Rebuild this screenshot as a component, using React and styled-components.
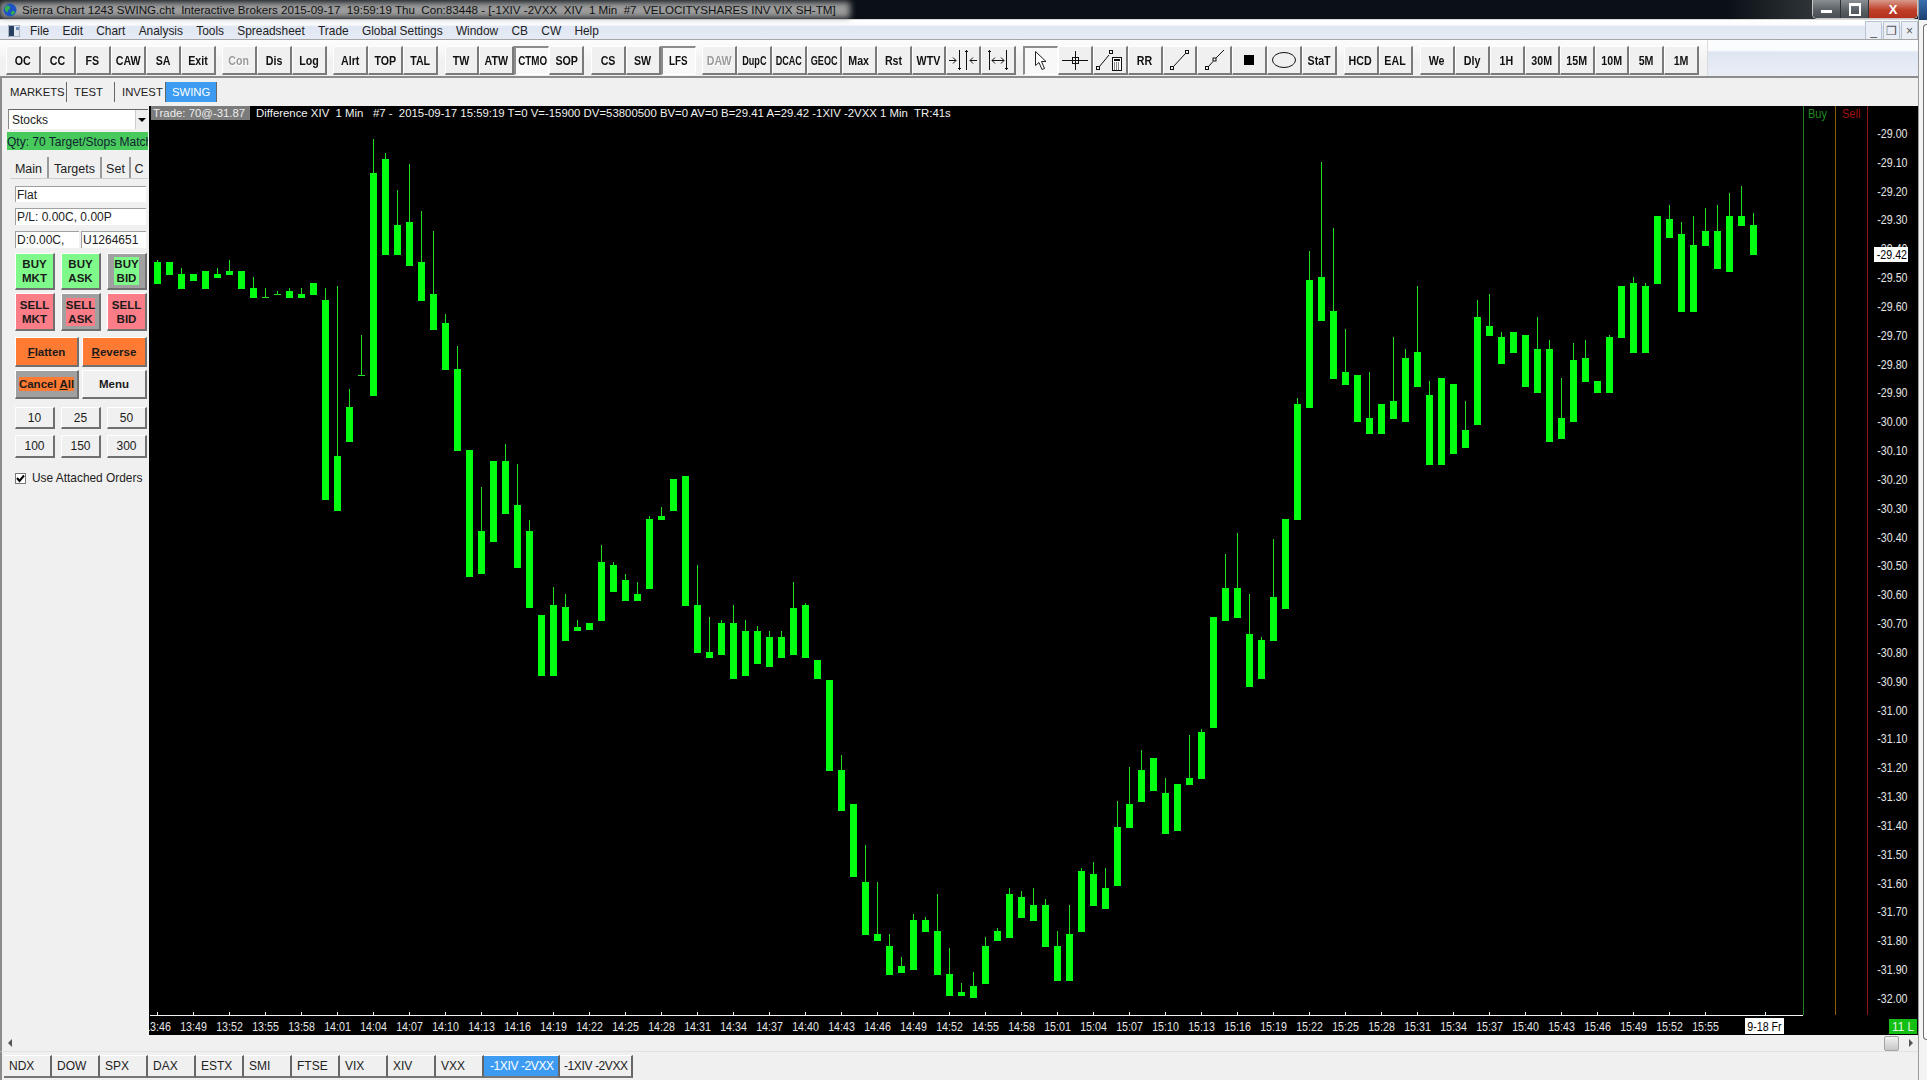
import React from 'react'
import styled, { createGlobalStyle } from 'styled-components'

const GlobalStyle = createGlobalStyle`
  html, body {
    margin: 0;
    width: 1927px;
    height: 1080px;
    overflow: hidden;
    background: #f0f0f0;
    font-family: "Liberation Sans", Arial, sans-serif;
  }
`

// wick top (0 = none), body top, body bottom, in page pixels; one bar per minute
const BARS = [
  [260, 262, 284], [0, 262, 275], [268, 274, 289], [0, 274, 281], [0, 271, 289], [268, 274, 278], [260, 271, 275], [0, 271, 289],
  [277, 288, 298], [288, 297, 298], [291, 294, 295], [288, 291, 298], [288, 294, 298], [0, 283, 295], [288, 300, 500], [286, 456, 511],
  [389, 407, 442], [335, 375, 376], [139, 173, 396], [153, 159, 255], [190, 225, 255], [164, 222, 266], [211, 262, 301], [231, 294, 330],
  [314, 323, 370], [346, 369, 451], [0, 450, 577], [487, 531, 574], [0, 461, 542], [444, 461, 514], [464, 505, 568], [520, 531, 608],
  [0, 615, 676], [587, 605, 676], [594, 607, 641], [620, 627, 631], [0, 623, 630], [545, 562, 621], [562, 565, 592], [574, 580, 601],
  [582, 594, 601], [516, 519, 589], [507, 516, 520], [0, 479, 511], [0, 476, 606], [565, 605, 653], [617, 652, 658], [620, 623, 655],
  [605, 623, 679], [620, 631, 676], [626, 631, 664], [631, 637, 667], [631, 637, 658], [582, 608, 655], [603, 605, 658], [0, 660, 679],
  [0, 680, 771], [755, 770, 811], [0, 804, 877], [845, 882, 935], [882, 934, 941], [934, 946, 975], [957, 966, 973], [914, 920, 970],
  [917, 920, 932], [894, 931, 975], [948, 974, 996], [983, 992, 996], [972, 986, 998], [937, 946, 984], [928, 931, 941], [888, 894, 938],
  [891, 897, 918], [888, 905, 921], [899, 905, 947], [931, 946, 981], [905, 934, 981], [868, 871, 932], [862, 874, 906], [868, 888, 909],
  [801, 827, 886], [767, 804, 828], [750, 770, 802], [0, 758, 791], [778, 793, 834], [0, 784, 831], [735, 778, 785], [729, 732, 779],
  [0, 617, 728], [554, 588, 621], [533, 588, 618], [594, 634, 687], [637, 640, 679], [539, 597, 641], [0, 519, 609], [398, 404, 520],
  [251, 280, 408], [162, 277, 321], [228, 311, 379], [329, 372, 385], [0, 375, 422], [372, 418, 434], [0, 404, 434], [337, 401, 419],
  [349, 358, 422], [286, 352, 387], [381, 395, 465], [0, 378, 465], [0, 384, 454], [401, 430, 448], [300, 317, 425], [294, 326, 336],
  [332, 337, 364], [0, 332, 353], [0, 335, 387], [317, 349, 393], [340, 349, 442], [378, 418, 439], [343, 360, 422], [340, 358, 382],
  [0, 381, 393], [335, 337, 393], [0, 286, 338], [277, 283, 353], [283, 286, 353], [0, 216, 284], [205, 219, 238], [222, 234, 312],
  [216, 245, 312], [208, 231, 246], [205, 231, 269], [193, 216, 272], [186, 216, 226], [213, 225, 255]
]

const barLeft = i => 154 + 12 * i
const timeLabel = i => {
  const total = 13 * 60 + 46 + i
  return `${Math.floor(total / 60)}:${String(total % 60).padStart(2, '0')}`
}

const TICKS = Array.from({ length: 44 }, (_, k) => k * 3)
const PRICES = Array.from({ length: 31 }, (_, k) => k)

const MENU = ['File', 'Edit', 'Chart', 'Analysis', 'Tools', 'Spreadsheet', 'Trade', 'Global Settings', 'Window', 'CB', 'CW', 'Help']

const TOOLBAR = [
  ['OC', 'CC', 'FS', 'CAW', 'SA', 'Exit'],
  ['Con:off', 'Dis', 'Log'],
  ['Alrt', 'TOP', 'TAL'],
  ['TW', 'ATW', 'CTMO:on', 'SOP'],
  ['CS', 'SW', 'LFS:on'],
  ['DAW:off', 'DupC:tight', 'DCAC:tight', 'GEOC:tight', 'Max', 'Rst', 'WTV', '#squeeze', '#stretch'],
  ['#cursor:on', '#cross', '#calc', 'RR', '#line', '#ray', '#stop', '#ellipse', 'StaT'],
  ['HCD', 'EAL'],
  ['We', 'Dly', '1H', '30M', '15M', '10M', '5M', '1M']
]

const BOTTOM_TABS = ['NDX', 'DOW', 'SPX', 'DAX', 'ESTX', 'SMI', 'FTSE', 'VIX', 'XIV', 'VXX']

const Page = styled.div`
  display: flex;
  width: 1927px;
  height: 1080px;
`
const Window = styled.div`
  display: flex;
  flex-direction: column;
  width: 1918px;
  height: 1080px;
`
const EdgeStrip = styled.div`
  flex: 1;
  display: flex;
  flex-direction: column;
  background: #f4f4f4;
  border-left: 1px solid #9a9a9a;
`
const EdgeIcon = styled.div`
  height: 20px;
  background: linear-gradient(#3a6fb0, #1c3f70);
`
const EdgeBox = styled.div`
  flex: 1;
  margin: 4px 0 40px 4px;
  background: #fff;
  border: 1px solid #707070;
  border-right: 0;
  border-radius: 5px 0 0 5px;
`

const TitleBar = styled.div`
  display: flex;
  align-items: center;
  justify-content: space-between;
  box-sizing: border-box;
  height: 20px;
  flex: none;
  background: linear-gradient(90deg, #0b1016 0, #0b1016 90%, #2f3439 94.5%, #15191e 100%);
  border-bottom: 1px solid #d8d8d8;
`
const TitleLeft = styled.div`
  position: relative;
  display: flex;
  align-items: center;
  gap: 5px;
  padding: 0 14px 0 3px;
  height: 19px;
  font-size: 11.6px;
  color: #111;
  white-space: nowrap;
  &::before {
    content: '';
    position: absolute;
    inset: 2px 0 1px 0;
    background: #9c9c9c;
    filter: blur(3px);
  }
`
const TitleText = styled.span`
  position: relative;
  white-space: pre;
`
const Globe = styled.svg`
  position: relative;
  flex: none;
`
const WinButtons = styled.div`
  display: flex;
  height: 18px;
  align-self: flex-start;
  border: 1px solid #c8c8c8;
  border-top: 0;
  border-radius: 0 0 5px 5px;
  overflow: hidden;
`
const WinButton = styled.div`
  display: flex;
  align-items: center;
  justify-content: center;
  width: ${p => p.$w}px;
  background: ${p => p.$close
    ? 'linear-gradient(#d89a8c, #c0402a 55%, #b5301c)'
    : 'linear-gradient(#8a8f94, #5c6167 55%, #484d52)'};
  border-right: 1px solid #30343a;
  color: #fff;
  font-weight: bold;
  font-size: 13px;
  &:last-child {
    border-right: 0;
  }
`
const MinGlyph = styled.div`
  width: 11px;
  height: 3px;
  margin-top: 5px;
  background: #fff;
`
const RestoreGlyph = styled.div`
  width: 8px;
  height: 8px;
  border: 2px solid #fff;
  border-top-width: 3px;
`

const MenuBar = styled.div`
  display: flex;
  align-items: center;
  box-sizing: border-box;
  height: 20px;
  flex: none;
  background: linear-gradient(#ffffff 0, #fbfcfe 25%, #dfe6f3 35%, #e6ebf5 100%);
  border-bottom: 1px solid #a6a6a6;
  font-size: 11.9px;
  color: #222;
`
const MenuIcon = styled.svg`
  flex: none;
  margin: 2px 10px 0 8px;
`
const MenuItems = styled.div`
  display: flex;
  gap: 13.3px;
  flex: 1;
  padding-top: 3px;
`
const MdiButtons = styled.div`
  display: flex;
  gap: 1px;
  align-self: stretch;
  padding-top: 1px;
`
const MdiButton = styled.div`
  display: flex;
  align-items: center;
  justify-content: center;
  box-sizing: border-box;
  width: 17px;
  background: #e9eef7;
  border: 1px solid #b9c3d2;
  border-bottom: 0;
  color: #555;
  font-size: 12px;
`

const Toolbar = styled.div`
  display: flex;
  height: 38px;
  flex: none;
  box-sizing: border-box;
  background: linear-gradient(#fdfdfd, #f1f1f1 60%, #f1f1f1);
  border-bottom: 2px solid #8c8c8c;
`
const ToolGroups = styled.div`
  display: flex;
  gap: 6.5px;
  padding: 6px 0 0 6px;
`
const ToolGroup = styled.div`
  display: flex;
`
const ToolFill = styled.div`
  flex: 1;
  margin-left: 8px;
  background: linear-gradient(#fbfcfe, #fbfcfe 28%, #dfe6f3 34%, #e9edf6);
  border-left: 1px solid #dcdcdc;
`
const ToolButton = styled.button`
  display: flex;
  align-items: center;
  justify-content: center;
  box-sizing: border-box;
  width: 34.93px;
  height: 29px;
  padding: 0;
  background: ${p => (p.$on ? '#f8f8f8' : '#f0f0f0')};
  border-style: solid;
  border-width: ${p => (p.$on ? '2px 1px 1px 2px' : '1px 2px 2px 1px')};
  border-color: ${p => (p.$on ? '#8c8c8c #ffffff #ffffff #8c8c8c' : '#ffffff #7a7a7a #7a7a7a #ffffff')};
  font-family: "Liberation Sans", Arial, sans-serif;
  font-size: ${p => (p.$on ? 12 : 13)}px;
  font-weight: bold;
  color: ${p => (p.$off ? '#9a9a9a' : '#111')};
  text-shadow: ${p => (p.$off ? '1px 1px 0 #fff' : 'none')};
`
const ToolLabel = styled.span`
  display: inline-block;
  transform: scaleX(${p => (p.$tight ? 0.7 : 0.82)});
  white-space: nowrap;
`

const TabRow = styled.div`
  display: flex;
  align-items: stretch;
  height: 28px;
  flex: none;
  box-sizing: border-box;
  padding: 4px 0 4px 8px;
  background: #f0f0f0;
  border-left: 2px solid #8c8c8c;
  font-size: 11.3px;
  color: #222;
`
const SheetTab = styled.div`
  display: flex;
  align-items: center;
  width: ${p => p.$w}px;
  padding: 0 0 0 ${p => p.$pad}px;
  box-sizing: border-box;
  background: ${p => (p.$active ? '#3d9cf2' : 'transparent')};
  color: ${p => (p.$active ? '#fff' : '#222')};
  border-right: 1px solid #666;
`

const Body = styled.div`
  display: flex;
  height: 929px;
  flex: none;
`
const Side = styled.div`
  display: flex;
  flex-direction: column;
  box-sizing: border-box;
  width: 149px;
  flex: none;
  padding: 3px 1px 0 5px;
  background: #f0f0f0;
  border-left: 2px solid #8c8c8c;
  font-size: 12px;
  color: #222;
  overflow: hidden;
`
const Combo = styled.div`
  display: flex;
  justify-content: space-between;
  align-items: center;
  box-sizing: border-box;
  height: 20px;
  margin-left: 1px;
  padding-left: 3px;
  background: #fff;
  border-top: 1px solid #666;
  border-left: 1px solid #888;
  line-height: 20px;
`
const ComboArrow = styled.div`
  display: flex;
  align-items: center;
  justify-content: center;
  width: 12px;
  height: 100%;
  background: #eee;
  border-left: 1px solid #ccc;
  &::after {
    content: '';
    border: 4px solid transparent;
    border-top: 4px solid #000;
    border-bottom: 0;
  }
`
const QtyBar = styled.div`
  height: 18px;
  margin-top: 3px;
  line-height: 20px;
  background: #48c95c;
  color: #123;
  white-space: nowrap;
  overflow: hidden;
`
const PanelTabs = styled.div`
  display: flex;
  height: 21px;
  margin: 7px 0 0 3px;
  border-bottom: 1px solid #cfcfcf;
  font-size: 12.5px;
`
const PanelTab = styled.div`
  display: flex;
  align-items: center;
  justify-content: center;
  box-sizing: border-box;
  width: ${p => p.$w}px;
  flex: none;
  padding-top: 2px;
  border-right: ${p => (p.$last ? 0 : '2px solid #9a9a9a')};
`
const Pane = styled.div`
  display: flex;
  flex-direction: column;
  padding: 0 0 0 8px;
`
const Field = styled.div`
  box-sizing: border-box;
  width: ${p => p.$w || 131}px;
  height: ${p => p.$h || 17}px;
  padding-left: 1px;
  line-height: 17px;
  background: #fff;
  border-top: 1px solid #a0a0a0;
  border-left: 1px solid #a0a0a0;
  white-space: nowrap;
  overflow: hidden;
`
const FieldRow = styled.div`
  display: flex;
  gap: 2px;
  margin-top: ${p => p.$top}px;
`
const Row = styled.div`
  display: flex;
  gap: ${p => p.$gap}px;
  margin-top: ${p => p.$top}px;
`
const TradeButton = styled.div`
  display: flex;
  align-items: center;
  justify-content: center;
  box-sizing: border-box;
  width: ${p => p.$w}px;
  height: ${p => p.$h}px;
  background: ${p => p.$bg};
  border-style: solid;
  border-width: 1px 2px 2px 1px;
  border-color: #fff #707070 #707070 #fff;
  font-size: ${p => p.$size || 12}px;
  font-weight: ${p => (p.$thin ? 'normal' : 'bold')};
  color: #1a1a1a;
  line-height: 14px;
  text-align: center;
`
const Highlight = styled.span`
  display: inline-block;
  background: ${p => p.$bg};
`
const CheckRow = styled.label`
  display: flex;
  align-items: center;
  gap: 6px;
  margin-top: 13px;
  font-size: 11.9px;
  white-space: nowrap;
`
const CheckBox = styled.span`
  display: flex;
  width: 11px;
  height: 11px;
  box-sizing: border-box;
  background: #fff;
  border: 1px solid #777;
`

const Chart = styled.div`
  position: relative;
  width: 1769px;
  background: #000;
  overflow: hidden;
`
const ChartHeader = styled.div`
  position: relative;
  display: flex;
  align-items: center;
  height: 14px;
  padding-left: 2px;
  color: #f2f2f2;
  font-size: 11.4px;
  white-space: pre;
`
const TradeTag = styled.span`
  width: 99px;
  height: 14px;
  line-height: 14px;
  padding-left: 2px;
  box-sizing: border-box;
  margin-right: 6px;
  background: #7b7b7b;
  color: #ececec;
  overflow: hidden;
`
const ChartCanvas = styled.svg`
  position: absolute;
  left: 0;
  top: 0;
  display: block;
  font-family: "Liberation Sans", Arial, sans-serif;
`

const ScrollRow = styled.div`
  display: flex;
  align-items: center;
  height: 17px;
  flex: none;
  box-sizing: border-box;
  padding: 0 5px 0 6px;
  background: #f0f0f0;
  border-left: 2px solid #8c8c8c;
  border-bottom: 1px solid #e2e2e2;
`
const ScrollArrow = styled.div`
  width: 0;
  height: 0;
  border-style: solid;
  border-width: 4px ${p => (p.$right ? 0 : '4px')} 4px ${p => (p.$right ? '4px' : 0)};
  border-color: transparent ${p => (p.$right ? 'transparent' : '#555')} transparent ${p => (p.$right ? '#555' : 'transparent')};
`
const ScrollTrack = styled.div`
  flex: 1;
  display: flex;
  justify-content: flex-end;
  padding-right: 10px;
`
const ScrollThumb = styled.div`
  width: 15px;
  height: 15px;
  background: linear-gradient(#f2f2f2, #c6c6c6);
  border: 1px solid #a4a4a4;
  border-radius: 2px;
  box-sizing: border-box;
`

const BottomTabs = styled.div`
  display: flex;
  flex: 1;
  align-items: flex-start;
  padding: 3px 0 0 2px;
  background: #f0f0f0;
  border-left: 2px solid #8c8c8c;
  box-sizing: border-box;
  font-size: 12px;
`
const BottomTab = styled.div`
  display: flex;
  align-items: center;
  box-sizing: border-box;
  width: ${p => p.$w}px;
  height: 23px;
  padding-left: ${p => p.$pad || 5}px;
  background: ${p => (p.$active ? '#3d9cf2' : '#f0f0f0')};
  color: ${p => (p.$active ? '#fff' : '#222')};
  border-right: 2px solid #666;
  border-bottom: 2px solid #777;
  border-top: 1px solid #fff;
  letter-spacing: ${p => p.$track || 0}px;
  white-space: nowrap;
`

const icons = {
  squeeze: (
    <svg width='30' height='22' viewBox='0 0 30 22' fill='none' stroke='#111'>
      <path d='M1 11.500h7M5 8.500l3 3-3 3M22 11.500h7M25 8.500l-3 3 3 3M11.500 1v20M18.500 1v20M10 19.500h3M17 2.500h3' />
    </svg>
  ),
  stretch: (
    <svg width='30' height='22' viewBox='0 0 30 22' fill='none' stroke='#111'>
      <path d='M6.500 1v20M23.500 1v20M5 2.500h3M22 19.500h3M9 11.500h12M12 8.500l-3 3 3 3M18 8.500l3 3-3 3' />
    </svg>
  ),
  cursor: (
    <svg width='16' height='22' viewBox='0 0 16 22' fill='#fff' stroke='#222'>
      <path d='M2.500 1.500v14l3.500-3 3 7 2.500-1-3-7h4.500z' />
    </svg>
  ),
  cross: (
    <svg width='28' height='22' viewBox='0 0 28 22' fill='none' stroke='#111'>
      <path d='M1 11.500h26M14.500 2v19' />
      <rect x='11.500' y='8.500' width='6' height='6' />
    </svg>
  ),
  calc: (
    <svg width='30' height='24' viewBox='0 0 30 24' fill='none' stroke='#111'>
      <rect x='1.500' y='18.500' width='3' height='3' />
      <path d='M4.500 18.500L14 7' />
      <rect x='14.500' y='2.500' width='3' height='3' />
      <rect x='17.500' y='9.500' width='9' height='13' fill='#fff' />
      <rect x='19' y='11' width='6' height='2' fill='#111' stroke='none' />
      <path d='M19 15h6M19 17h6M19 19h6M19 21h6' strokeDasharray='1 1' />
    </svg>
  ),
  line: (
    <svg width='24' height='24' viewBox='0 0 24 24' fill='none' stroke='#111'>
      <rect x='3.500' y='18.500' width='3' height='3' />
      <path d='M6.500 18.500L18 6' />
      <rect x='18.500' y='2.500' width='3' height='3' />
    </svg>
  ),
  ray: (
    <svg width='24' height='24' viewBox='0 0 24 24' fill='none' stroke='#111'>
      <rect x='3.500' y='18.500' width='3' height='3' />
      <path d='M6.500 18.500l4.500-5M14 10l8-8' />
      <rect x='11' y='10' width='3' height='3' />
    </svg>
  ),
  stop: (
    <svg width='12' height='12' viewBox='0 0 12 12'>
      <rect x='1' y='1' width='10' height='10' fill='#000' />
    </svg>
  ),
  ellipse: (
    <svg width='26' height='20' viewBox='0 0 26 20' fill='none' stroke='#111'>
      <ellipse cx='13' cy='10' rx='11.500' ry='7.500' />
    </svg>
  )
}

const ToolItem = ({ spec }) => {
  const [name, state] = spec.split(':')
  const isIcon = name.startsWith('#')
  return (
    <ToolButton $on={state === 'on'} $off={state === 'off'}>
      {isIcon ? icons[name.slice(1)] : <ToolLabel $tight={state === 'tight'}>{name}</ToolLabel>}
    </ToolButton>
  )
}

const ChartDrawing = () => (
  <ChartCanvas width='1769' height='929' viewBox='149 106 1769 929'>
    {BARS.map(([wick, top, bottom], i) => (
      <g key={i}>
        {wick > 0 && <rect x={barLeft(i) + 3} y={wick} width='1' height={top - wick} fill='#22dd22' />}
        <rect x={barLeft(i)} y={top} width='7' height={bottom - top} fill='#00ff10' />
        {bottom - top < 2 && <rect x={barLeft(i)} y={top} width='7' height='1' fill='#22dd22' />}
      </g>
    ))}

    <rect x='1803' y='106' width='1' height='909' fill='#237f23' />
    <rect x='1835' y='106' width='1' height='909' fill='#8b5c06' />
    <rect x='1867' y='106' width='1' height='909' fill='#8f1414' />
    <text x='0' y='0' fontSize='13' fill='#1e8a1e' transform='translate(1808 118) scale(.85 1)'>Buy</text>
    <text x='0' y='0' fontSize='13' fill='#a01010' transform='translate(1842 118) scale(.85 1)'>Sell</text>

    {PRICES.map(k => (
      <text key={k} x='0' y='0' fontSize='13' fill='#e6e6e6' textAnchor='end' transform={`translate(1907.500 ${138 + k * 28.83}) scale(.82 1)`}>
        {`-${(29 + k / 10).toFixed(2)}`}
      </text>
    ))}
    <rect x='1874' y='247' width='34' height='15' fill='#fff' />
    <text x='0' y='0' fontSize='13' fill='#000' textAnchor='end' transform='translate(1907 259) scale(.82 1)'>-29.42</text>

    <rect x='150' y='1015' width='1653' height='1' fill='#f0f0f0' />
    {TICKS.map(i => (
      <g key={i}>
        <rect x={157 + 12 * i} y='1012' width='1' height='3' fill='#f0f0f0' />
        <text x='0' y='0' fontSize='13' fill='#e6e6e6' textAnchor='middle' transform={`translate(${157.5 + 12 * i} 1031) scale(.82 1)`}>
          {timeLabel(i)}
        </text>
      </g>
    ))}
    <rect x='1765' y='1012' width='1' height='3' fill='#f0f0f0' />
    <rect x='1745' y='1018' width='39' height='16' fill='#fff' />
    <text x='0' y='0' fontSize='13' fill='#000' textAnchor='middle' transform='translate(1764.500 1031) scale(.82 1)'>9-18 Fr</text>

    <rect x='1889' y='1019' width='28' height='15' fill='#12bf12' />
    <text x='0' y='0' fontSize='13' fill='#e8f8e8' textAnchor='middle' transform='translate(1903 1031) scale(.9 1)'>11 L</text>
  </ChartCanvas>
)

export default function App() {
  return (
    <Page>
      <GlobalStyle />
      <Window>
        <TitleBar>
          <TitleLeft>
            <Globe width='14' height='14' viewBox='0 0 14 14'>
              <circle cx='7' cy='7' r='6.500' fill='#1d54c4' />
              <path d='M3 3c2-1 4 0 4 2s-2 1-2 3-2 1-3-1 0-3 1-4zM9 8c1.500 0 3 0 3 1s-2 3-3 3-1-4 0-4z' fill='#35b04a' />
            </Globe>
            <TitleText>Sierra Chart 1243 SWING.cht  Interactive Brokers 2015-09-17  19:59:19 Thu  Con:83448 - [-1XIV -2VXX  XIV  1 Min  #7  VELOCITYSHARES INV VIX SH-TM]</TitleText>
          </TitleLeft>
          <WinButtons>
            <WinButton $w={27}><MinGlyph /></WinButton>
            <WinButton $w={27}><RestoreGlyph /></WinButton>
            <WinButton $w={48} $close>X</WinButton>
          </WinButtons>
        </TitleBar>

        <MenuBar>
          <MenuIcon width='12' height='12' viewBox='0 0 12 12'>
            <rect x='0' y='0' width='12' height='12' fill='#dfe6ef' stroke='#7d8794' />
            <rect x='1' y='1' width='5' height='10' fill='#27405f' />
            <rect x='8' y='2' width='3' height='3' fill='#6d8fb8' />
          </MenuIcon>
          <MenuItems>
            {MENU.map(item => <span key={item}>{item}</span>)}
          </MenuItems>
          <MdiButtons>
            <MdiButton>_</MdiButton>
            <MdiButton>❐</MdiButton>
            <MdiButton>×</MdiButton>
          </MdiButtons>
        </MenuBar>

        <Toolbar>
          <ToolGroups>
            {TOOLBAR.map((group, g) => (
              <ToolGroup key={g}>
                {group.map(spec => <ToolItem key={spec} spec={spec} />)}
              </ToolGroup>
            ))}
          </ToolGroups>
          <ToolFill />
        </Toolbar>

        <TabRow>
          <SheetTab $w={57} $pad={0}>MARKETS</SheetTab>
          <SheetTab $w={48} $pad={7}>TEST</SheetTab>
          <SheetTab $w={51} $pad={7}>INVEST</SheetTab>
          <SheetTab $w={51} $pad={6} $active>SWING</SheetTab>
        </TabRow>

        <Body>
          <Side>
            <Combo>Stocks<ComboArrow /></Combo>
            <QtyBar>Qty: 70 Target/Stops Match</QtyBar>
            <PanelTabs>
              <PanelTab $w={39}>Main</PanelTab>
              <PanelTab $w={53}>Targets</PanelTab>
              <PanelTab $w={29}>Set</PanelTab>
              <PanelTab $w={16} $last>C</PanelTab>
            </PanelTabs>
            <Pane>
              <FieldRow $top={7}><Field $h={16}>Flat</Field></FieldRow>
              <FieldRow $top={6}><Field>P/L: 0.00C, 0.00P</Field></FieldRow>
              <FieldRow $top={6}>
                <Field $w={64}>D:0.00C,</Field>
                <Field $w={65}>U1264651</Field>
              </FieldRow>
              <Row $gap={6} $top={5}>
                <TradeButton $w={40} $h={37} $bg='#7ffa8a' $size={11.5}>BUY<br />MKT</TradeButton>
                <TradeButton $w={40} $h={37} $bg='#7ffa8a' $size={11.5}>BUY<br />ASK</TradeButton>
                <TradeButton $w={40} $h={37} $bg='#a0a0a0' $size={11.5}><Highlight $bg='#7ffa8a'>BUY<br />BID</Highlight></TradeButton>
              </Row>
              <Row $gap={6} $top={3}>
                <TradeButton $w={40} $h={38} $bg='#fb7d88' $size={11.5}>SELL<br />MKT</TradeButton>
                <TradeButton $w={40} $h={38} $bg='#a0a0a0' $size={11.5}><Highlight $bg='#fb7d88'>SELL<br />ASK</Highlight></TradeButton>
                <TradeButton $w={40} $h={38} $bg='#fb7d88' $size={11.5}>SELL<br />BID</TradeButton>
              </Row>
              <Row $gap={3} $top={6}>
                <TradeButton $w={64} $h={30} $bg='#ff7a33' $size={11.5}><span><u>F</u>latten</span></TradeButton>
                <TradeButton $w={65} $h={30} $bg='#ff7a33' $size={11.5}><span><u>R</u>everse</span></TradeButton>
              </Row>
              <Row $gap={3} $top={3}>
                <TradeButton $w={64} $h={29} $bg='#a0a0a0' $size={11.5}><Highlight $bg='#ff7a33'>Cancel <u>A</u>ll</Highlight></TradeButton>
                <TradeButton $w={65} $h={29} $bg='#f0f0f0' $size={11.5}>Menu</TradeButton>
              </Row>
              <Row $gap={6} $top={8}>
                <TradeButton $w={40} $h={22} $bg='#f0f0f0' $thin>10</TradeButton>
                <TradeButton $w={40} $h={22} $bg='#f0f0f0' $thin>25</TradeButton>
                <TradeButton $w={40} $h={22} $bg='#f0f0f0' $thin>50</TradeButton>
              </Row>
              <Row $gap={6} $top={6}>
                <TradeButton $w={40} $h={23} $bg='#f0f0f0' $thin>100</TradeButton>
                <TradeButton $w={40} $h={23} $bg='#f0f0f0' $thin>150</TradeButton>
                <TradeButton $w={40} $h={23} $bg='#f0f0f0' $thin>300</TradeButton>
              </Row>
              <CheckRow>
                <CheckBox>
                  <svg width='9' height='9' viewBox='0 0 9 9'>
                    <path d='M1 4l2.500 3L8 1.500' fill='none' stroke='#000' strokeWidth='2' />
                  </svg>
                </CheckBox>
                Use Attached Orders
              </CheckRow>
            </Pane>
          </Side>

          <Chart>
            <ChartDrawing />
            <ChartHeader>
              <TradeTag>Trade: 70@-31.87</TradeTag>
              Difference XIV  1 Min   #7 -  2015-09-17 15:59:19 T=0 V=-15900 DV=53800500 BV=0 AV=0 B=29.41 A=29.42 -1XIV -2VXX 1 Min  TR:41s
            </ChartHeader>
          </Chart>
        </Body>

        <ScrollRow>
          <ScrollArrow />
          <ScrollTrack><ScrollThumb /></ScrollTrack>
          <ScrollArrow $right />
        </ScrollRow>

        <BottomTabs>
          {BOTTOM_TABS.map(tab => <BottomTab key={tab} $w={48}>{tab}</BottomTab>)}
          <BottomTab $w={76} $pad={6} $track={-0.4} $active>-1XIV -2VXX</BottomTab>
          <BottomTab $w={73} $pad={4} $track={-0.4}>-1XIV -2VXX</BottomTab>
        </BottomTabs>
      </Window>
      <EdgeStrip>
        <EdgeIcon />
        <EdgeBox />
      </EdgeStrip>
    </Page>
  )
}
